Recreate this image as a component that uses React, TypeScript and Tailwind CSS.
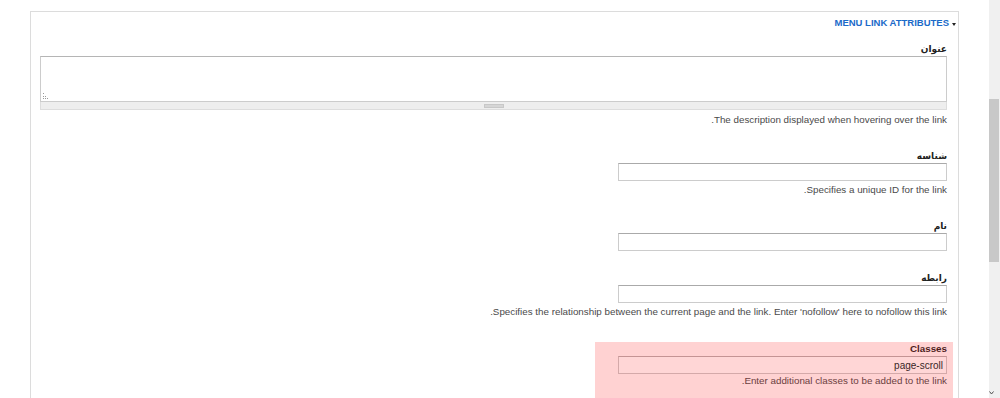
const font = "font-['Liberation_Sans','DejaVu_Sans',sans-serif]";

function Label({ text, className = "" }: { text: string; className?: string }) {
  return (
    <div className={`text-[9px] leading-[13px] font-bold text-[#222] font-['DejaVu_Sans','Liberation_Sans',sans-serif] ${className}`}>
      {text}
    </div>
  );
}

function Desc({ text, className = "" }: { text: string; className?: string }) {
  return <div className={`text-[9.8px] leading-[13px] text-[#4a4a4a] ${className}`}>{text}</div>;
}

function TextInput({ value = "" }: { value?: string }) {
  return (
    <input
      readOnly
      value={value}
      className="block h-[18px] w-[329px] border border-[#ccc] border-t-[#aaa] bg-white px-[3px] text-[10px] outline-none"
    />
  );
}

function ResizeDots() {
  return (
    <svg width="7" height="7" viewBox="0 0 7 7">
      {[
        [0, 0],
        [0, 3],
        [2, 3],
        [0, 5],
        [2, 5],
        [4, 5],
      ].map(([x, y], i) => (
        <rect key={i} x={x} y={y} width="1" height="1" fill="#9a9a9a" />
      ))}
    </svg>
  );
}

export default function App() {
  return (
    <div className={`flex h-[398px] overflow-hidden bg-white ${font}`}>
      <div className="flex-1 pl-[30px] pr-[30px] pt-[11px]">
        <div dir="rtl" className="h-full border border-b-0 border-[#dcdcdc] pl-[9px] pr-[11px]">
          {/* fieldset legend */}
          <div className="mt-[5px] -mr-[9px] flex h-[12px] items-center gap-[3px]">
            <span className="mt-[2px] h-0 w-0 border-x-[2.5px] border-t-[3px] border-x-transparent border-t-[#222]" />
            <span className="text-[9.5px] leading-[12px] font-bold uppercase text-[#1b6ac9]">
              Menu link attributes
            </span>
          </div>

          {/* title */}
          <Label text="عنوان" className="mt-[14px]" />
          <div className="flex h-[46px] items-end justify-end border border-[#ccc] border-t-[#b5b5b5] bg-white pb-[1px] pl-[2px]">
            <ResizeDots />
          </div>
          <div className="flex h-[8px] items-center justify-center border-x border-b border-[#ddd] bg-[#eeeeee]">
            <div className="h-[4px] w-[20px] border border-[#c8c8c8] bg-[#d6d6d6]" />
          </div>
          <Desc text="The description displayed when hovering over the link." className="mt-[3px]" />

          {/* id */}
          <Label text="شناسه" className="mt-[24px]" />
          <TextInput />
          <Desc text="Specifies a unique ID for the link." className="mt-[2px]" />

          {/* name */}
          <Label text="نام" className="mt-[24px]" />
          <TextInput />

          {/* rel */}
          <Label text="رابطه" className="mt-[21px]" />
          <TextInput />
          <Desc
            text="Specifies the relationship between the current page and the link. Enter 'nofollow' here to nofollow this link."
            className="mt-[2px]"
          />

          {/* classes (error) */}
          <div className="-mr-[6px] mt-[24px] w-[358px] bg-[#ffd2d2] pb-[12px] pr-[6px]">
            <div className="text-[9.8px] leading-[13px] font-bold text-[#4e1d1d]">Classes</div>
            <input
              readOnly
              value="page-scroll"
              className="mt-[1px] block h-[18px] w-[329px] border border-[#d4a9a9] border-t-[#c49494] bg-[#ffd6d6] px-[3px] text-[10px] text-[#3a2626] outline-none"
            />
            <div className="text-[9.8px] leading-[13px] text-[#6b4040]">
              Enter additional classes to be added to the link.
            </div>
          </div>
        </div>
      </div>

      {/* browser scrollbar */}
      <div className="flex w-[11px] flex-col bg-[#f0f0f0]">
        <div className="mt-[99px] h-[163px] w-[10px] bg-[#c8c8c8]" />
        <div className="flex-1" />
        <div className="mb-[1px] flex h-[6px] justify-start">
          <svg width="5" height="4" viewBox="0 0 5 4">
            <path d="M0.5 0.5 L2.5 3 L4.5 0.5" fill="none" stroke="#505050" strokeWidth="1" />
          </svg>
        </div>
      </div>
    </div>
  );
}
